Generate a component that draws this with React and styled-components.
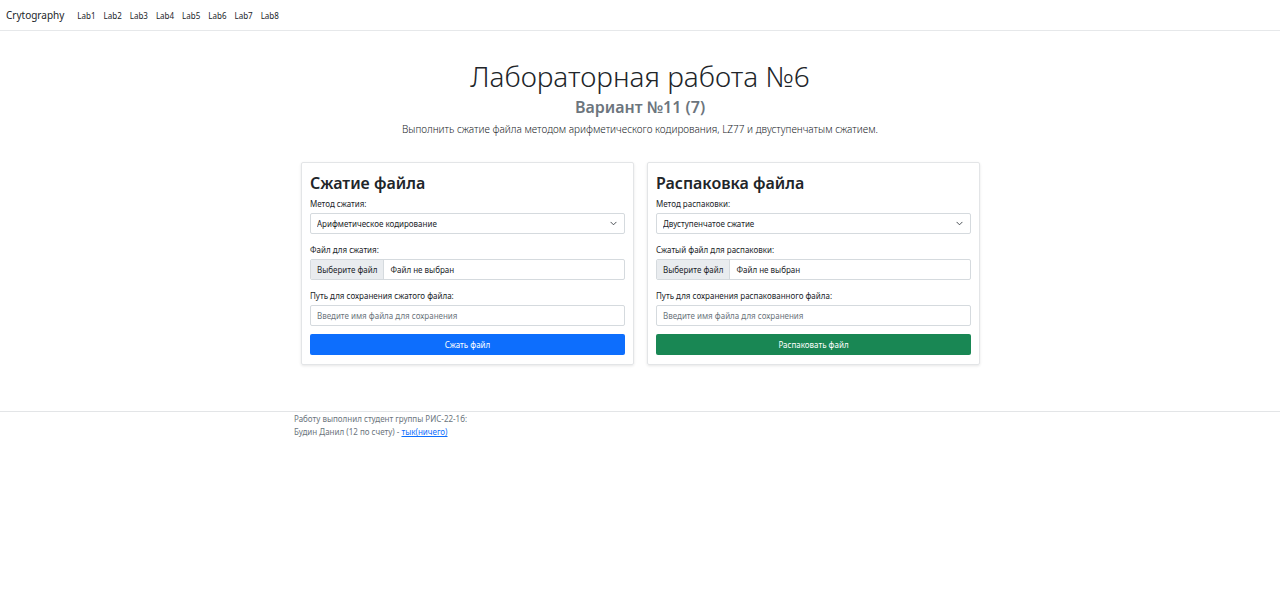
import React from "react";
import styled, { createGlobalStyle } from "styled-components";

const GlobalStyle = createGlobalStyle`
  *, *::before, *::after { box-sizing: border-box; }
  body {
    margin: 0;
    background: #fff;
    color: #212529;
    font-family: "Segoe UI", "Noto Sans", "Open Sans", sans-serif;
    font-size: 8px;
    line-height: 13px;
  }
  button, input, select { font: inherit; color: inherit; }
`;

const Navbar = styled.nav`
  display: flex;
  align-items: center;
  height: 31px;
  padding: 0 6px;
  border-bottom: 1px solid #e6e8ea;
`;

const Brand = styled.a`
  margin-right: 13px;
  font-size: 10px;
  line-height: 16px;
  color: #212529;
  text-decoration: none;
`;

const NavList = styled.ul`
  display: flex;
  gap: 8px;
  margin: 0;
  padding: 0;
  list-style: none;
`;

const NavLink = styled.a`
  color: #212529;
  text-decoration: none;
`;

const Header = styled.header`
  padding: 25px 16px 0;
  text-align: center;
`;

const Title = styled.h1`
  margin: 0;
  font-size: 28px;
  font-weight: 300;
  line-height: 40px;
`;

const Variant = styled.h2`
  margin: 0 0 3px;
  font-size: 16px;
  font-weight: 600;
  line-height: 22px;
  color: #6c757d;
`;

const Lead = styled.p`
  margin: 0;
  font-size: 10px;
  font-weight: 300;
  line-height: 16px;
`;

const Cards = styled.main`
  display: grid;
  grid-template-columns: 1fr 1fr;
  gap: 13px;
  max-width: 692px;
  margin: 25px auto 46px;
  padding: 0 6px 0 7px;
`;

const Card = styled.form`
  display: flex;
  flex-direction: column;
  padding: 9px 8px;
  border: 1px solid #e3e5e7;
  border-radius: 2px;
  box-shadow: 0 1px 3px rgba(0, 0, 0, 0.1);
`;

const CardTitle = styled.h3`
  margin: 0 0 3px;
  font-size: 16px;
  font-weight: 600;
  line-height: 22px;
`;

const Field = styled.div`
  display: flex;
  flex-direction: column;
  gap: 3px;
  margin-bottom: ${(p) => (p.$last ? 8 : 9)}px;
`;

const Label = styled.label``;

const SelectBox = styled.div`
  display: grid;
  align-items: center;
  > * { grid-area: 1 / 1; }
`;

const Select = styled.select`
  width: 100%;
  height: 21px;
  padding: 0 20px 0 6px;
  border: 1px solid #d5dade;
  border-radius: 2px;
  background: #fff;
  appearance: none;
`;

const Chevron = styled.svg`
  justify-self: end;
  width: 7px;
  height: 7px;
  margin-right: 8px;
  pointer-events: none;
`;

const FileBox = styled.div`
  position: relative;
  display: flex;
  height: 21px;
  border: 1px solid #d5dade;
  border-radius: 2px;
  line-height: 19px;
  overflow: hidden;
`;

const FileInput = styled.input`
  position: absolute;
  inset: 0;
  width: 100%;
  opacity: 0;
`;

const FileButton = styled.span`
  padding: 0 6px;
  border-right: 1px solid #d5dade;
  background: #e9ecef;
`;

const FileName = styled.span`
  padding: 0 6px;
`;

const TextInput = styled.input`
  width: 100%;
  height: 21px;
  padding: 0 6px;
  border: 1px solid #d5dade;
  border-radius: 2px;
  &::placeholder { color: #6c757d; opacity: 1; }
`;

const Submit = styled.button`
  height: 21px;
  padding: 0;
  border: 0;
  border-radius: 2px;
  background: ${(p) => p.$color};
  color: #fff;
`;

const Footer = styled.footer`
  border-top: 1px solid #e3e5e7;
  color: #6c757d;
`;

const FooterText = styled.p`
  max-width: 692px;
  margin: 0 auto;
`;

const FooterLink = styled.a`
  color: #0d6efd;
`;

const labs = [1, 2, 3, 4, 5, 6, 7, 8];
const methods = ["Арифметическое кодирование", "LZ77", "Двуступенчатое сжатие"];

function FileForm({ id, title, methodLabel, method, fileLabel, pathLabel, action, color }) {
  return (
    <Card onSubmit={(e) => e.preventDefault()}>
      <CardTitle>{title}</CardTitle>
      <Field>
        <Label htmlFor={`${id}-method`}>{methodLabel}</Label>
        <SelectBox>
          <Select id={`${id}-method`} defaultValue={method}>
            {methods.map((m) => (
              <option key={m}>{m}</option>
            ))}
          </Select>
          <Chevron viewBox="0 0 16 16" fill="none" stroke="#343a40" strokeWidth="2" strokeLinecap="round" strokeLinejoin="round" aria-hidden="true">
            <path d="m2 5 6 6 6-6" />
          </Chevron>
        </SelectBox>
      </Field>
      <Field>
        <Label htmlFor={`${id}-file`}>{fileLabel}</Label>
        <FileBox>
          <FileButton>Выберите файл</FileButton>
          <FileName>Файл не выбран</FileName>
          <FileInput id={`${id}-file`} type="file" />
        </FileBox>
      </Field>
      <Field $last>
        <Label htmlFor={`${id}-path`}>{pathLabel}</Label>
        <TextInput id={`${id}-path`} type="text" placeholder="Введите имя файла для сохранения" />
      </Field>
      <Submit type="submit" $color={color}>{action}</Submit>
    </Card>
  );
}

export default function App() {
  return (
    <>
      <GlobalStyle />
      <Navbar>
        <Brand href="#">Crytography</Brand>
        <NavList>
          {labs.map((n) => (
            <li key={n}>
              <NavLink href={`#lab${n}`}>{`Lab${n}`}</NavLink>
            </li>
          ))}
        </NavList>
      </Navbar>
      <Header>
        <Title>Лабораторная работа №6</Title>
        <Variant>Вариант №11 (7)</Variant>
        <Lead>Выполнить сжатие файла методом арифметического кодирования, LZ77 и двуступенчатым сжатием.</Lead>
      </Header>
      <Cards>
        <FileForm
          id="pack"
          title="Сжатие файла"
          methodLabel="Метод сжатия:"
          method={methods[0]}
          fileLabel="Файл для сжатия:"
          pathLabel="Путь для сохранения сжатого файла:"
          action="Сжать файл"
          color="#0d6efd"
        />
        <FileForm
          id="unpack"
          title="Распаковка файла"
          methodLabel="Метод распаковки:"
          method={methods[2]}
          fileLabel="Сжатый файл для распаковки:"
          pathLabel="Путь для сохранения распакованного файла:"
          action="Распаковать файл"
          color="#198754"
        />
      </Cards>
      <Footer>
        <FooterText>
          Работу выполнил студент группы РИС-22-1б:
          <br />
          Будин Данил (12 по счету) - <FooterLink href="#">тык(ничего)</FooterLink>
        </FooterText>
      </Footer>
    </>
  );
}
